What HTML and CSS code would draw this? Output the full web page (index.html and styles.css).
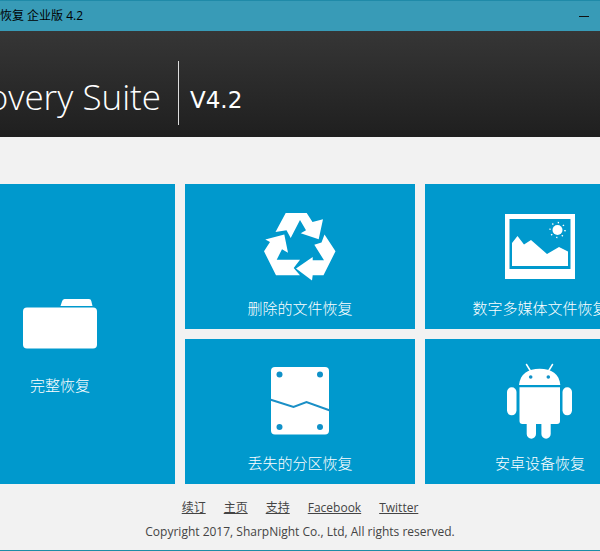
FILE: index.html
```html
<!DOCTYPE html>
<html lang="zh-CN">
<head>
<meta charset="utf-8">
<title>恢复 企业版 4.2</title>
<link rel="stylesheet" href="styles.css">
</head>
<body>
<div class="window">
  <div class="titlebar">
    <span class="titlebar-text">恢复 企业版 4.2</span>
    <button class="minimize" type="button" aria-label="最小化"></button>
  </div>
  <header class="banner">
    <h1 class="product"><span>overy Suite</span></h1>
    <span class="version">V4.2</span>
  </header>
  <main class="tiles">
    <button class="tile tile-tall" type="button">
      <svg class="icon" width="76" height="76" viewBox="0 0 76 76" fill="#fff" aria-hidden="true">
        <path d="M38.500 21 40 16.500Q40.500 14 42.500 14H67Q69 14 69.300 16L70.500 21Z"/>
        <rect x="1" y="22.500" width="74" height="41" rx="4"/>
      </svg>
      <span>完整恢复</span>
    </button>
    <button class="tile" type="button">
      <svg class="icon" width="76" height="76" viewBox="0 0 76 76" fill="#fff" aria-hidden="true">
        <path d="M23.700 5H44.700L50.500 14 61 11.300 56.700 31.300 38.700 25.300 44 22.300 38 12 28.700 30 24.500 22.300 13.500 24Z"/>
        <path d="M22.300 26.500 26 44.700 20 41.300 14.700 51.700H38L31.700 60 38 67.300H14L2 43.300 8 34 3.300 31.500Z"/>
        <path d="M34 60.500 50.700 49V52.300H62L52.300 36.700 59.500 34.500 62.500 26.500 73.500 43.300 61.500 67.300H50.700L50 72.500Z"/>
      </svg>
      <span>删除的文件恢复</span>
    </button>
    <button class="tile" type="button">
      <svg class="icon" width="76" height="76" viewBox="0 0 76 76" fill="#fff" aria-hidden="true">
        <path fill-rule="evenodd" d="M3 6H73V71H3ZM7.500 11V61H68.500V11Z"/>
        <path d="M10 58V35L15.500 28 22 36.500 29 32 45 46 57 39 66 43.500V58Z"/>
        <circle cx="55.500" cy="22" r="5"/>
        <circle cx="55.500" cy="22" r="7.500" fill="none" stroke="#fff" stroke-width="1.500" stroke-dasharray="1.300 4.590"/>
      </svg>
      <span>数字多媒体文件恢复</span>
    </button>
    <button class="tile" type="button">
      <svg class="icon" width="76" height="76" viewBox="0 0 76 76" aria-hidden="true">
        <rect x="9" y="4" width="58" height="67.500" rx="4" fill="#fff"/>
        <path d="M8 36.500 31.500 44 44.500 39 68 47.500" fill="none" stroke="#1a8fc6" stroke-width="2"/>
        <g fill="#1091c8"><circle cx="17.500" cy="11.500" r="3"/><circle cx="58" cy="11.500" r="3"/><circle cx="17.500" cy="64" r="3"/><circle cx="58" cy="64" r="3"/></g>
      </svg>
      <span>丢失的分区恢复</span>
    </button>
    <button class="tile" type="button">
      <svg class="icon" width="76" height="76" viewBox="0 0 76 76" fill="#fff" aria-hidden="true">
        <path d="M17 22C18 11 26 5.700 37.700 5.700S57.500 11 58.300 22Z"/>
        <path d="M28.500 8 24.500 1.500M46.500 8 50.500 1.500" stroke="#fff" stroke-width="1.500" stroke-linecap="round"/>
        <path d="M17.500 24.300H58V58Q58 61 55 61H48.700V71A4.600 4.600 0 0 1 39.400 71V61H34V71A4.600 4.600 0 0 1 24.700 71V61H20.500Q17.500 61 17.500 58Z"/>
        <rect x="5" y="24.300" width="9.500" height="28" rx="4.700"/>
        <rect x="60.500" y="24.300" width="9.500" height="28" rx="4.700"/>
        <g fill="#1091c8"><circle cx="28.700" cy="14" r="1.800"/><circle cx="46.300" cy="14" r="1.800"/></g>
      </svg>
      <span>安卓设备恢复</span>
    </button>
  </main>
  <footer class="footer">
    <nav class="links">
      <a href="#renew">续订</a>
      <a href="#home">主页</a>
      <a href="#support">支持</a>
      <a href="#facebook">Facebook</a>
      <a href="#twitter">Twitter</a>
    </nav>
    <p class="copyright">Copyright 2017, SharpNight Co., Ltd, All rights reserved.</p>
  </footer>
</div>
</body>
</html>
```
FILE: styles.css
```css
* {
  box-sizing: border-box;
}

body {
  margin: 0;
  background: #fff;
  font-family: "Open Sans", "Noto Sans CJK SC", sans-serif;
}

.window {
  overflow: hidden;
  background: #f2f2f2;
  border-top: 1px solid #1f8aa8;
  border-bottom: 1px solid #1d8ca6;
}

.titlebar {
  display: flex;
  align-items: center;
  justify-content: space-between;
  height: 30px;
  padding-right: 10px;
  background: #389bb7;
  color: #000;
  font-size: 12px;
}

.titlebar-text {
  line-height: 30px;
  white-space: nowrap;
}

.minimize {
  width: 12px;
  height: 12px;
  padding: 0;
  border: 0;
  background: linear-gradient(#111, #111) center / 10px 1px no-repeat;
}

.banner {
  display: flex;
  align-items: flex-end;
  height: 106px;
  padding-bottom: 12px;
  background: linear-gradient(#363636, #1f1f1f);
  color: #fff;
}

.product {
  display: flex;
  justify-content: flex-end;
  width: 179px;
  height: 64px;
  margin: 0;
  padding-right: 17px;
  border-right: 1px solid #ddd;
  font: 300 35px/72px "Open Sans", sans-serif;
  white-space: nowrap;
}

.version {
  padding-left: 11px;
  font: 23px/50px "DejaVu Sans", sans-serif;
}

.tiles {
  display: grid;
  grid-template-columns: repeat(3, 230px);
  grid-auto-rows: 145px;
  gap: 10px;
  justify-content: center;
  padding: 47px 0 12px;
}

.tile {
  display: flex;
  flex-direction: column;
  align-items: center;
  justify-content: center;
  gap: 14px;
  padding: 12px 0 0;
  border: 0;
  background: #0099cd;
  color: #fff;
  font: 300 15px/20px "Noto Sans CJK SC", sans-serif;
  white-space: nowrap;
}

.tile-tall {
  grid-row: span 2;
}

.icon {
  display: block;
  flex: none;
}

.footer {
  padding-bottom: 6px;
  color: #444;
  font-size: 12px;
  line-height: 24px;
  text-align: center;
}

.links {
  display: flex;
  justify-content: center;
  gap: 18px;
}

.links a {
  color: inherit;
}

.copyright {
  margin: 0;
}
```
